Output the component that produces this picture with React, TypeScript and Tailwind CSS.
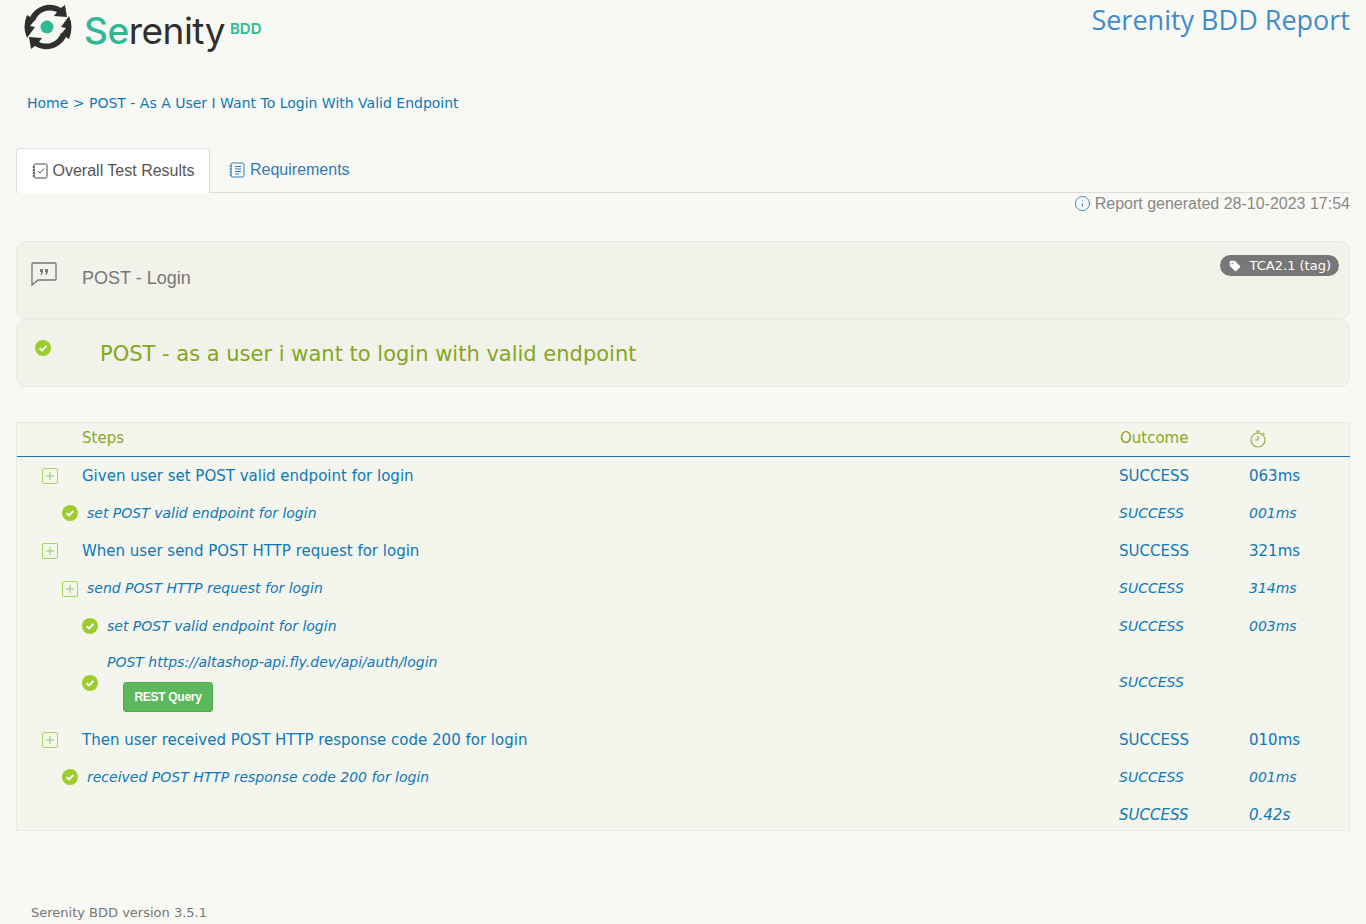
import React from 'react';
import { Info, Tag } from 'lucide-react';

const sans = 'font-["Liberation_Sans",Arial,sans-serif]';

const Logo = () => (
  <svg width="54" height="54" viewBox="0 0 54 54" className="shrink-0">
    <path d="M9 17 A 22 22 0 0 1 40 8 L 44 5 L 46 17 L 33 16 L 36 12 A 16 16 0 0 0 14 21 Z" fill="#2f2f2f" />
    <path d="M45 37 A 22 22 0 0 1 14 46 L 10 49 L 8 37 L 21 38 L 18 42 A 16 16 0 0 0 40 33 Z" fill="#2f2f2f" />
    <path d="M6 15 Q 1 27 6 38 L 14 27 L 9 26 L 14 20 Z" fill="#2f2f2f" />
    <path d="M48 39 Q 53 27 48 16 L 40 27 L 45 28 L 40 34 Z" fill="#2f2f2f" />
    <circle cx="26" cy="27" r="6.5" fill="#2fb893" />
  </svg>
);

const Check = () => (
  <svg width="16" height="16" viewBox="0 0 16 16" className="shrink-0">
    <circle cx="8" cy="8" r="8" fill="#9ccc2e" />
    <path d="M4.6 8.2 L7 10.4 L11.4 6" fill="none" stroke="#fff" strokeWidth="2" />
  </svg>
);

const Plus = () => (
  <span className="flex h-4 w-4 shrink-0 items-center justify-center rounded-[2px] border border-[#a5d85a] bg-[#f4f6ec]">
    <svg width="10" height="10" viewBox="0 0 10 10">
      <path d="M5 1 V9 M1 5 H9" stroke="#b3d49a" strokeWidth="1.4" />
    </svg>
  </span>
);

const Row = ({ icon, left, text, time, sub, h = 'h-[37.6px]' }: any) => (
  <div className={`flex items-center ${h} text-[#0f78b8] ${sub ? 'text-[14px] italic' : 'text-[15px]'}`}>
    <div className="flex flex-1 items-center" style={{ paddingLeft: left }}>
      {icon === 'plus' ? <Plus /> : <Check />}
      <div className={sub ? 'ml-[9px]' : 'ml-[24px]'}>{text}</div>
    </div>
    <div className="w-[130px]">SUCCESS</div>
    <div className="w-[100px]">{time}</div>
  </div>
);

export default function App() {
  return (
    <div className={'min-h-[924px] bg-[#f8f9f4] font-["DejaVu_Sans",Verdana,sans-serif]'}>
      <header className="flex h-[56px] items-start justify-between pl-[21px] pr-4">
        <div className="flex items-start">
          <Logo />
          <div className="ml-[9px] mt-[7px] flex items-start font-['Inter',sans-serif] text-[37px] leading-[48px] tracking-[-0.5px]">
            <span className="font-medium text-[#2fb893]">Se</span>
            <span className="font-normal text-[#2f2f2f]">renity</span>
            <span className="ml-[5px] mt-[9px] text-[15px] font-semibold leading-[26px] tracking-normal text-[#2fb893]">BDD</span>
          </div>
        </div>
        <div className="mt-[2px] text-[27px] leading-[36px] text-[#428bca] font-['Open_Sans',sans-serif]">Serenity BDD Report</div>
      </header>

      <div className="mt-[38px] pl-[27px] text-[14px] leading-[18px] text-[#0f78b8]">
        Home &gt; POST - As A User I Want To Login With Valid Endpoint
      </div>

      <div className="px-4">
        <nav className={`mt-[36px] flex h-[45px] border-b border-[#ddd] text-[16px] ${sans}`}>
          <div className="-mb-px flex h-[45px] w-[194px] items-center justify-center gap-[5px] rounded-t border border-b-0 border-[#ddd] bg-white text-[#555]">
            <svg width="16" height="16" viewBox="0 0 16 16" fill="none" stroke="#444" strokeWidth="1">
              <rect x="2" y="1" width="13" height="14" rx="1.5" />
              <path d="M0.5 4 H3 M0.5 7 H3 M0.5 10 H3 M0.5 13 H3" />
              <path d="M6 8 L8 10 L12 5.5" />
            </svg>
            Overall Test Results
          </div>
          <div className="ml-[19px] flex items-center gap-[5px] text-[#337ab7]">
            <svg width="16" height="16" viewBox="0 0 16 16" fill="none" stroke="#337ab7" strokeWidth="1">
              <rect x="2" y="1" width="13" height="14" rx="1.5" />
              <path d="M0.5 4 H3 M0.5 7 H3 M0.5 10 H3 M0.5 13 H3 M6 4.5 H12 M6 7 H12 M6 9.5 H12 M6 12 H10" />
            </svg>
            Requirements
          </div>
        </nav>

        <div className={`flex h-[21px] items-center justify-end gap-[4px] text-[16px] text-[#888] ${sans}`}>
          <Info size={17} strokeWidth={1.25} className="text-[#337ab7]" />
          Report generated 28-10-2023 17:54
        </div>

        <section className={`relative mt-[27px] flex h-[78px] rounded-[10px] border border-[#e9eae2] bg-[#f1f2ea] text-[18px] text-[#777] ${sans}`}>
          <svg width="26" height="25" viewBox="0 0 26 25" fill="none" className="ml-[14px] mt-[20px]">
            <path d="M1 2 Q1 1 2 1 H24 Q25 1 25 2 V17 Q25 18 24 18 H7 L1 23 Z" stroke="#777" strokeWidth="1.3" />
            <path d="M9 7 h3 v3 l-1.5 3 h-1 l0.8 -3 h-1.3 Z M14 7 h3 v3 l-1.5 3 h-1 l0.8 -3 h-1.3 Z" fill="#777" />
          </svg>
          <div className="ml-[25px] mt-[24px] leading-[24px]">POST - Login</div>
          <div className="absolute right-[10px] top-[13px] flex h-[21px] items-center rounded-full bg-[#777] pl-2 pr-2 font-['DejaVu_Sans',sans-serif] text-[13px] text-white">
            <Tag size={14} fill="#fff" stroke="#777" className="mr-[8px]" />
            TCA2.1 (tag)
          </div>
        </section>

        <section className="flex h-[68px] rounded-[10px] border border-[#e9eae2] bg-[#f1f2ea] text-[21px] text-[#87a61c]">
          <div className="ml-[18px] mt-[20px]"><Check /></div>
          <div className="ml-[49px] mt-[20px] leading-[28px]">POST - as a user i want to login with valid endpoint</div>
        </section>

        <section className="mt-[35px] h-[409px] border border-[#e9eae2] bg-[#f4f5ed]">
          <div className="flex h-[34px] items-center border-b border-[#1a74a8] pb-[2px] text-[15px] text-[#8aa81f] -mr-px">
            <div className="flex-1 pl-[65px]">Steps</div>
            <div className="w-[130px]">Outcome</div>
            <div className="w-[100px]">
              <svg width="16" height="18" viewBox="0 0 16 18" fill="none" stroke="#9aad3a" strokeWidth="1.2">
                <circle cx="8" cy="10" r="7" />
                <path d="M8 6 V10 H5 M6 1 H10 M8 1 V3 M13 3 L14.5 4.5" />
              </svg>
            </div>
          </div>
          <div className="pt-[-1px]">
            <Row icon="plus" left={25} text="Given user set POST valid endpoint for login" time="063ms" />
            <Row icon="check" left={45} sub text="set POST valid endpoint for login" time="001ms" />
            <Row icon="plus" left={25} text="When user send POST HTTP request for login" time="321ms" />
            <Row icon="plus" left={45} sub text="send POST HTTP request for login" time="314ms" />
            <Row icon="check" left={65} sub text="set POST valid endpoint for login" time="003ms" />
            <Row
              icon="check"
              left={65}
              sub
              h="h-[76px]"
              time=""
              text={
                <div>
                  <div className="leading-[18px]">POST https://altashop-api.fly.dev/api/auth/login</div>
                  <div className={`ml-4 mt-[11px] flex h-[30px] w-[90px] items-center justify-center rounded-[3px] border border-[#4cae4c] bg-[#5cb85c] text-[12px] not-italic font-bold tracking-[-0.3px] text-white ${sans}`}>
                    REST Query
                  </div>
                </div>
              }
            />
            <Row icon="plus" left={25} text="Then user received POST HTTP response code 200 for login" time="010ms" />
            <Row icon="check" left={45} sub text="received POST HTTP response code 200 for login" time="001ms" />
            <div className="flex h-[37.6px] items-center text-[15px] italic text-[#0f78b8]">
              <div className="flex-1" />
              <div className="w-[130px]">SUCCESS</div>
              <div className="w-[100px]">0.42s</div>
            </div>
          </div>
        </section>
      </div>

      <footer className="mt-[73px] pl-[31px] text-[13px] leading-[18px] text-[#777]">Serenity BDD version 3.5.1</footer>
    </div>
  );
}
